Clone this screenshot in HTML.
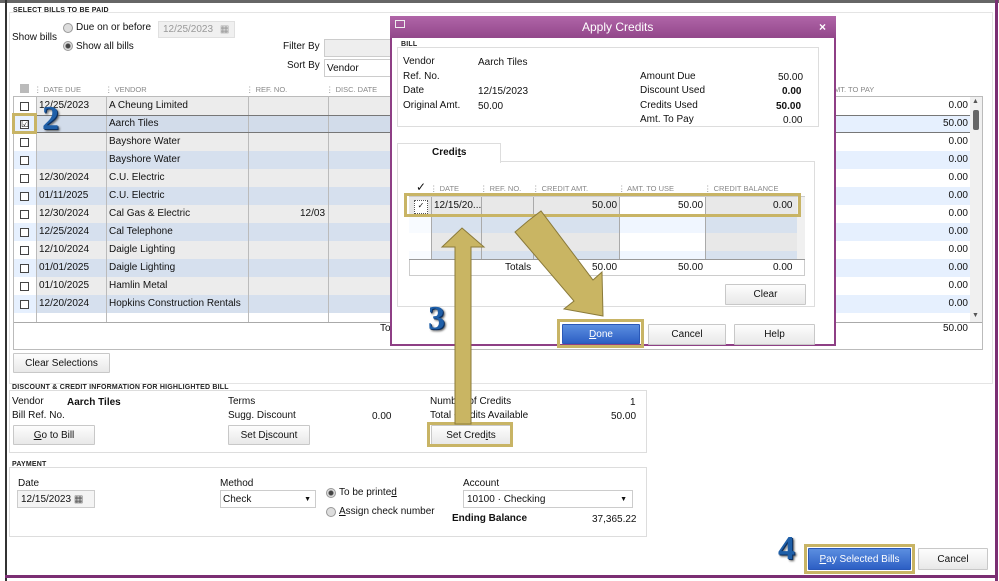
<!DOCTYPE html>
<html><head><style>
*{box-sizing:border-box;margin:0;padding:0}
body{width:999px;height:581px;overflow:hidden;background:#fff;font-family:"Liberation Sans",Arial,sans-serif;font-size:10px;color:#111;position:relative}
.a{position:absolute;white-space:nowrap}
.lbl{font-size:7px;color:#222;font-weight:bold;letter-spacing:.2px}
.hdr{font-size:7.5px;color:#888}
.btn{position:absolute;border:1px solid #c8c8c8;background:linear-gradient(#fdfdfd,#e8e8e8);font-size:10px;display:flex;align-items:center;justify-content:center;border-radius:1px}
.gold{position:absolute;border:3px solid #c8b465}
.box{position:absolute;border:1px solid #ddd}
.cb{position:absolute;width:9px;height:9px;border:1px solid #444;background:#fff}
.row{position:absolute;left:14px;width:956px;height:18px}
.num{font-weight:bold;color:#1f5fa8;font-family:"Liberation Serif",serif;font-size:34px;text-shadow:1px 1px 0 #0b2f60,2px 2px 2px #555}
</style></head><body>
<div class="a" style="left:0;top:0;width:999px;height:3px;background:#666"></div>
<div class="a" style="left:5px;top:0;width:2px;height:581px;background:#333"></div>
<div class="a" style="left:995px;top:0;width:3px;height:581px;background:#7b2f73"></div>
<div class="a" style="left:5px;top:575px;width:993px;height:3px;background:#7b2f73"></div>

<div class="a lbl" style="left:13px;top:7px">SELECT BILLS TO BE PAID</div>
<div class="box" style="left:9px;top:12px;width:984px;height:372px;border-color:#e4e4e4"></div>
<div class="a" style="left:12px;top:32px">Show bills</div>
<div class="a" style="left:63px;top:23px;width:10px;height:10px;border-radius:50%;border:1px solid #999;background:#ddd"></div>
<div class="a" style="left:76px;top:22px">Due on or before</div>
<div class="a" style="left:158px;top:21px;width:77px;height:17px;background:#f0f0f0;border:1px solid #e0e0e0;color:#999;padding:2px 4px">12/25/2023 <span style="color:#999;margin-left:4px">▦</span></div>
<div class="a" style="left:63px;top:41px;width:10px;height:10px;border-radius:50%;border:1px solid #999;background:radial-gradient(#444 2px,#ddd 3px)"></div>
<div class="a" style="left:76px;top:41px">Show all bills</div>
<div class="a" style="left:283px;top:41px">Filter By</div>
<div class="a" style="left:324px;top:39px;width:70px;height:18px;background:#eee;border:1px solid #ccc"></div>
<div class="a" style="left:287px;top:60px">Sort By</div>
<div class="a" style="left:324px;top:59px;width:70px;height:18px;background:#fff;border:1px solid #ccc;padding:3px 2px">Vendor</div>

<div class="a" style="left:20px;top:84px;width:9px;height:9px;background:#bbb"></div>
<div class="a hdr" style="left:34px;top:85px">⋮ DATE DUE</div>
<div class="a hdr" style="left:105px;top:85px">⋮ VENDOR</div>
<div class="a hdr" style="left:246px;top:85px">⋮ REF. NO.</div>
<div class="a hdr" style="left:326px;top:85px">⋮ DISC. DATE</div>
<div class="a hdr" style="left:834px;top:85px">MT. TO PAY</div>

<div class="box" style="left:13px;top:96px;width:970px;height:254px;border-color:#bbb"></div>
<div id="rows"></div>
<script>
var d=[["12/25/2023","A Cheung Limited",""],["","Aarch Tiles",""],["","Bayshore Water",""],["","Bayshore Water",""],["12/30/2024","C.U. Electric",""],["01/11/2025","C.U. Electric",""],["12/30/2024","Cal Gas & Electric","12/03"],["12/25/2024","Cal Telephone",""],["12/10/2024","Daigle Lighting",""],["01/01/2025","Daigle Lighting",""],["01/10/2025","Hamlin Metal",""],["12/20/2024","Hopkins Construction Rentals",""]];
var h="";
for(var i=0;i<12;i++){var y=97+i*18;var bg=i%2?"#d6e0ee":"#ececec";var rb=i%2?"#e6f0fe":"#fff";
if(i==1){bg="#d2dcea";rb="#e6f0fe";}
h+='<div class="row" style="top:'+y+'px;background:'+bg+'"></div>';
h+='<div class="a" style="left:14px;top:'+y+'px;width:22px;height:18px;background:'+(i%2?"#e6f0fe":"#fff")+'"></div>';
h+='<div class="a" style="left:835px;top:'+y+'px;width:135px;height:18px;background:'+rb+'"></div>';
h+='<div class="cb" style="left:20px;top:'+(y+5)+'px"></div>';
h+='<div class="a" style="left:39px;top:'+(y+3)+'px">'+d[i][0]+'</div>';
h+='<div class="a" style="left:109px;top:'+(y+3)+'px">'+d[i][1]+'</div>';
h+='<div class="a" style="left:300px;top:'+(y+3)+'px">'+d[i][2]+'</div>';
h+='<div class="a" style="left:930px;top:'+(y+3)+'px;width:38px;text-align:right">'+(i==1?"50.00":"0.00")+'</div>';}
for(var x of [36,106,248,328])h+='<div class="a" style="left:'+x+'px;top:97px;width:1px;height:226px;background:#bbb"></div>';
document.getElementById("rows").innerHTML=h;
</script>
<div class="a" style="left:14px;top:115px;width:956px;height:18px;border-top:1px solid #777;border-bottom:1px solid #777"></div>
<div class="a" style="left:21px;top:119px;font-size:9px">☑</div>
<div class="gold" style="left:12px;top:113px;width:25px;height:21px"></div>
<div class="a num" style="left:42px;top:100px">2</div>
<div class="a" style="left:970px;top:97px;width:12px;height:226px;background:#f0f0f0"></div>
<div class="a" style="left:973px;top:110px;width:6px;height:20px;background:#666;border-radius:2px"></div>
<div class="a" style="left:972px;top:98px;font-size:7px;color:#555">▲</div>
<div class="a" style="left:972px;top:312px;font-size:7px;color:#555">▼</div>
<div class="a" style="left:14px;top:322px;width:968px;height:1px;background:#aaa"></div>
<div class="a" style="left:380px;top:323px">To</div>
<div class="a" style="left:930px;top:323px;width:38px;text-align:right">50.00</div>
<div class="btn" style="left:13px;top:353px;width:97px;height:20px">Clear Selections</div>

<div class="a lbl" style="left:12px;top:384px">DISCOUNT &amp; CREDIT INFORMATION FOR HIGHLIGHTED BILL</div>
<div class="box" style="left:9px;top:390px;width:638px;height:63px"></div>
<div class="a" style="left:12px;top:396px">Vendor</div><div class="a" style="left:67px;top:397px;font-weight:bold">Aarch Tiles</div>
<div class="a" style="left:12px;top:410px">Bill Ref. No.</div>
<div class="btn" style="left:13px;top:425px;width:82px;height:20px"><u>G</u>o to Bill</div>
<div class="a" style="left:228px;top:396px">Terms</div>
<div class="a" style="left:228px;top:410px">Sugg. Discount</div><div class="a" style="left:372px;top:411px">0.00</div>
<div class="btn" style="left:228px;top:425px;width:82px;height:20px">Set D<u>i</u>scount</div>
<div class="a" style="left:430px;top:396px">Number of Credits</div><div class="a" style="left:630px;top:397px">1</div>
<div class="a" style="left:430px;top:410px">Total Credits Available</div><div class="a" style="left:611px;top:411px">50.00</div>
<div class="btn" style="left:431px;top:425px;width:80px;height:20px">Set Cred<u>i</u>ts</div>
<div class="gold" style="left:427px;top:422px;width:86px;height:25px"></div>

<div class="a lbl" style="left:12px;top:461px">PAYMENT</div>
<div class="box" style="left:9px;top:467px;width:638px;height:70px"></div>
<div class="a" style="left:18px;top:478px">Date</div>
<div class="a" style="left:17px;top:490px;width:78px;height:18px;border:1px solid #ccc;background:#f4f4f4;padding:3px 3px">12/15/2023 <span style="color:#555">▦</span></div>
<div class="a" style="left:220px;top:478px">Method</div>
<div class="a" style="left:220px;top:490px;width:96px;height:18px;border:1px solid #ccc;padding:3px 2px">Check<span style="position:absolute;right:4px;font-size:7px;top:5px">▼</span></div>
<div class="a" style="left:326px;top:488px;width:10px;height:10px;border-radius:50%;border:1px solid #999;background:radial-gradient(#444 2px,#ddd 3px)"></div>
<div class="a" style="left:339px;top:487px">To be printe<u>d</u></div>
<div class="a" style="left:326px;top:507px;width:10px;height:10px;border-radius:50%;border:1px solid #999;background:#ddd"></div>
<div class="a" style="left:339px;top:506px"><u>A</u>ssign check number</div>
<div class="a" style="left:463px;top:478px">Account</div>
<div class="a" style="left:463px;top:490px;width:170px;height:18px;border:1px solid #ccc;padding:3px 3px">10100 · Checking<span style="position:absolute;right:5px;font-size:7px;top:5px">▼</span></div>
<div class="a" style="left:452px;top:513px;font-weight:bold">Ending Balance</div>
<div class="a" style="left:592px;top:514px">37,365.22</div>

<div class="a num" style="left:778px;top:530px">4</div>
<div class="btn" style="left:808px;top:548px;width:103px;height:22px;background:linear-gradient(#5b8ee0,#2d5fc4);color:#fff;border-color:#2a58b8"><u>P</u>ay Selected Bills</div>
<div class="gold" style="left:804px;top:544px;width:111px;height:30px"></div>
<div class="btn" style="left:918px;top:548px;width:70px;height:22px">Cancel</div>

<div class="a" style="left:390px;top:16px;width:446px;height:330px;background:#fff;border:2px solid #8e3f85"></div>
<div class="a" style="left:390px;top:16px;width:446px;height:22px;background:linear-gradient(#b065a8,#92478a)"></div>
<div class="a" style="left:395px;top:20px;width:10px;height:8px;border:1px solid #eee"></div>
<div class="a" style="left:582px;top:20px;color:#fff;font-size:12px">Apply Credits</div>
<div class="a" style="left:819px;top:20px;color:#fff;font-size:12px;font-weight:bold">×</div>
<div class="a lbl" style="left:401px;top:41px">BILL</div>
<div class="box" style="left:397px;top:47px;width:422px;height:80px"></div>
<div class="a" style="left:403px;top:56px">Vendor</div><div class="a" style="left:478px;top:57px">Aarch Tiles</div>
<div class="a" style="left:403px;top:71px">Ref. No.</div>
<div class="a" style="left:403px;top:85px">Date</div><div class="a" style="left:478px;top:86px">12/15/2023</div>
<div class="a" style="left:403px;top:100px">Original Amt.</div><div class="a" style="left:478px;top:101px">50.00</div>
<div class="a" style="left:640px;top:71px">Amount Due</div><div class="a" style="left:778px;top:72px">50.00</div>
<div class="a" style="left:640px;top:85px">Discount Used</div><div class="a" style="left:782px;top:86px;font-weight:bold">0.00</div>
<div class="a" style="left:640px;top:100px">Credits Used</div><div class="a" style="left:776px;top:101px;font-weight:bold">50.00</div>
<div class="a" style="left:640px;top:114px">Amt. To Pay</div><div class="a" style="left:783px;top:115px">0.00</div>
<div class="a" style="left:397px;top:143px;width:104px;height:20px;border:1px solid #ddd;border-bottom:none;background:#fff;z-index:2"></div>
<div class="a" style="left:432px;top:147px;font-weight:bold;z-index:3">Credi<u>t</u>s</div>
<div class="box" style="left:397px;top:161px;width:418px;height:146px"></div>
<div class="a" style="left:416px;top:180px;font-size:12px">✓</div>
<div class="a hdr" style="left:430px;top:184px">⋮ DATE</div>
<div class="a hdr" style="left:480px;top:184px">⋮ REF. NO.</div>
<div class="a hdr" style="left:532px;top:184px">⋮ CREDIT AMT.</div>
<div class="a hdr" style="left:618px;top:184px">⋮ AMT. TO USE</div>
<div class="a hdr" style="left:704px;top:184px">⋮ CREDIT BALANCE</div>
<div class="a" style="left:409px;top:196px;width:396px;height:80px;border:1px solid #ccc"></div>
<div class="a" style="left:409px;top:197px;width:388px;height:18px;background:#e8e8e8"></div>
<div class="a" style="left:620px;top:197px;width:86px;height:18px;background:#fff"></div>
<div class="a" style="left:409px;top:215px;width:388px;height:18px;background:#d7e1ee"></div>
<div class="a" style="left:409px;top:233px;width:388px;height:18px;background:#e8e8e8"></div>
<div class="a" style="left:409px;top:251px;width:388px;height:8px;background:#d7e1ee"></div>
<div class="a" style="left:409px;top:215px;width:22px;height:44px;background:#f8fbff"></div>
<div class="a" style="left:620px;top:215px;width:86px;height:44px;background:#f0f6ff"></div>
<div class="a" style="left:409px;top:233px;width:22px;height:18px;background:#fff"></div>
<div class="a" style="left:620px;top:233px;width:86px;height:18px;background:#fff"></div>
<div class="a" style="left:431px;top:197px;width:1px;height:62px;background:#aaa"></div>
<div class="a" style="left:481px;top:197px;width:1px;height:62px;background:#aaa"></div>
<div class="a" style="left:533px;top:197px;width:1px;height:62px;background:#aaa"></div>
<div class="a" style="left:619px;top:197px;width:1px;height:62px;background:#aaa"></div>
<div class="a" style="left:705px;top:197px;width:1px;height:62px;background:#aaa"></div>
<div class="a" style="left:414px;top:200px;width:14px;height:14px;border:1px dotted #555;background:#fff;font-size:8px;text-align:center">✓</div>
<div class="a" style="left:434px;top:200px">12/15/20...</div>
<div class="a" style="left:592px;top:200px">50.00</div>
<div class="a" style="left:678px;top:200px">50.00</div>
<div class="a" style="left:773px;top:200px">0.00</div>
<div class="a" style="left:797px;top:197px;width:8px;height:62px;background:#f0f0f0"></div>
<div class="a" style="left:409px;top:259px;width:396px;height:1px;background:#999"></div>
<div class="a" style="left:505px;top:262px">Totals</div>
<div class="a" style="left:592px;top:262px">50.00</div>
<div class="a" style="left:678px;top:262px">50.00</div>
<div class="a" style="left:773px;top:262px">0.00</div>
<div class="gold" style="left:404px;top:193px;width:397px;height:24px"></div>
<div class="btn" style="left:725px;top:284px;width:81px;height:21px">Clear</div>
<div class="btn" style="left:562px;top:324px;width:78px;height:20px;background:linear-gradient(#5b8ee0,#2d5fc4);color:#fff;border-color:#2a58b8"><u>D</u>one</div>
<div class="gold" style="left:557px;top:319px;width:87px;height:29px"></div>
<div class="btn" style="left:648px;top:324px;width:78px;height:21px">Cancel</div>
<div class="btn" style="left:734px;top:324px;width:81px;height:21px">Help</div>
<div class="a num" style="left:428px;top:300px">3</div>

<svg class="a" style="left:0;top:0" width="999" height="581">
<polygon points="462,228 484,247 471,247 471,424 455,424 455,247 442,247" fill="#c9b563" stroke="#8a7a3a" stroke-width="1"/>
<polygon points="528,221 541,211 593,280 602,272 603,316 564,309 574,301 515,232" fill="#c9b563" stroke="#8a7a3a" stroke-width="1"/>
</svg>
</body></html>
